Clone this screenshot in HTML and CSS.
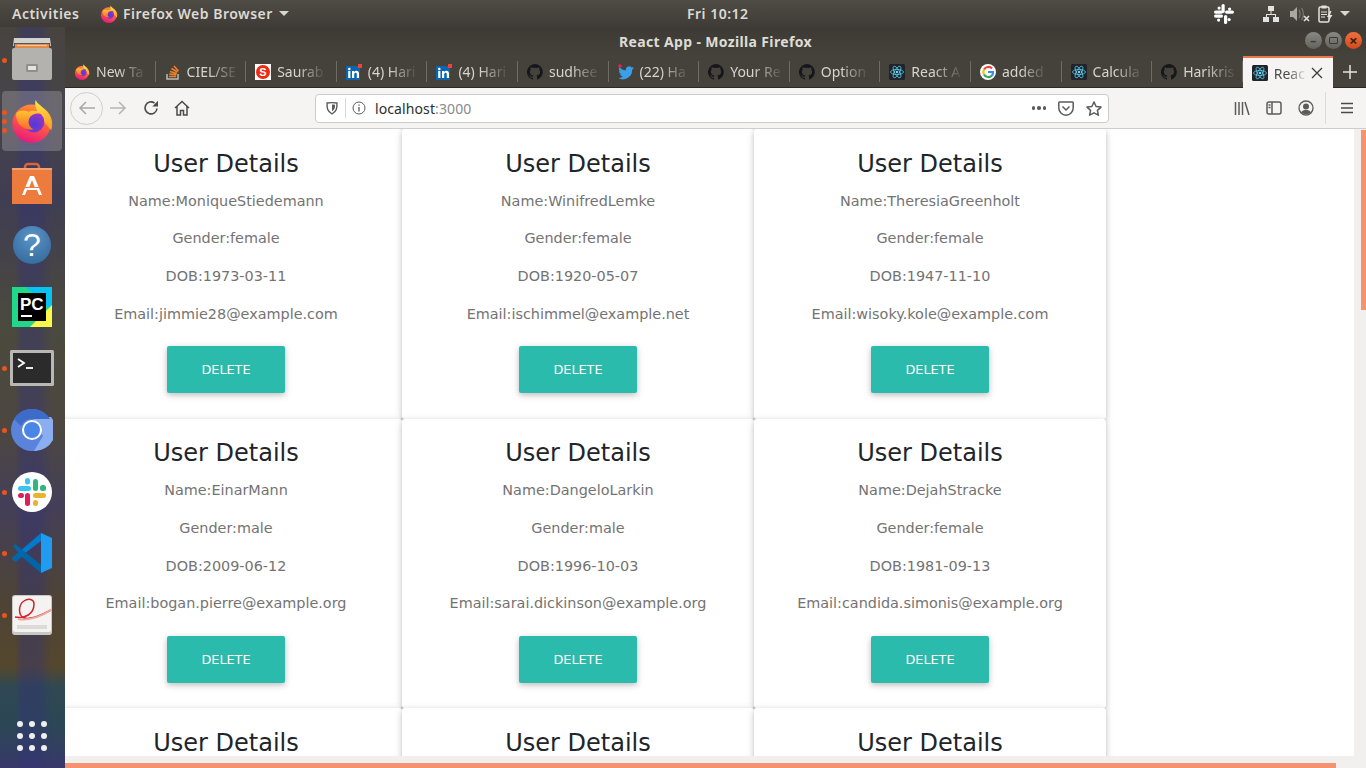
FILE: index.html
```html
<!DOCTYPE html>
<html lang="en">
<head>
    <meta charset="UTF-8">
    <title>React App - Mozilla Firefox</title>
    <link rel="stylesheet" href="styles.css">
</head>
<body>

<svg class="defs" width="0" height="0">
    <defs>
        <linearGradient id="fxBody" x1="0.7" y1="0" x2="0.3" y2="1">
            <stop offset="0" stop-color="#ff9a2e"/>
            <stop offset="0.55" stop-color="#ff4f4a"/>
            <stop offset="1" stop-color="#e31587"/>
        </linearGradient>
        <linearGradient id="fxFlame" x1="0" y1="0" x2="0.4" y2="1">
            <stop offset="0" stop-color="#ffe847"/>
            <stop offset="1" stop-color="#ffa52e"/>
        </linearGradient>
        <linearGradient id="fxFace" x1="0.5" y1="0" x2="0.4" y2="1">
            <stop offset="0" stop-color="#ffc62e"/>
            <stop offset="1" stop-color="#ff6a2e"/>
        </linearGradient>
        <radialGradient id="fxCore" cx="0.5" cy="0.65" r="0.65">
            <stop offset="0" stop-color="#4f3bd6"/>
            <stop offset="1" stop-color="#a033c4"/>
        </radialGradient>
        <symbol id="firefox" viewBox="0 0 48 48">
            <circle fill="url(#fxBody)" cx="23.500" cy="27" r="21"/>
            <path fill="url(#fxFlame)" d="M28 1c2 5 8 7 13 13 5 6 6 13 4 20L30 17c0-6-4-10-2-16z"/>
            <circle fill="url(#fxCore)" cx="26" cy="25" r="11.500"/>
            <path fill="url(#fxFace)" d="M7 15c4-3 9-3 13-1 4-2 10-2 14 2-6-1-11 1-13 5-2 5 0 10 5 12-7 2-15-2-18-9-1-3-2-6-1-9z"/>
        </symbol>
        <symbol id="github" viewBox="0 0 16 16">
            <path fill="#16171a" d="M8 0a8 8 0 0 0-2.500 15.600c.4.1.5-.2.5-.4v-1.400c-2.200.5-2.700-1-2.700-1-.4-.9-.9-1.200-.9-1.200-.7-.5.1-.5.1-.5.8.1 1.200.8 1.200.8.7 1.200 1.900.9 2.300.7.1-.5.3-.9.5-1.100-1.800-.2-3.600-.9-3.600-4 0-.9.3-1.600.8-2.100-.1-.2-.4-1 .1-2.100 0 0 .7-.2 2.200.8a7.600 7.600 0 0 1 4 0c1.500-1 2.200-.8 2.200-.8.4 1.100.2 1.900.1 2.100.5.6.8 1.300.8 2.100 0 3.100-1.900 3.700-3.700 3.900.3.3.6.8.6 1.500v2.200c0 .2.100.5.6.4A8 8 0 0 0 8 0z"/>
        </symbol>
        <symbol id="react" viewBox="0 0 16 16">
            <rect width="16" height="16" rx="1.500" fill="#20232a"/>
            <g fill="none" stroke="#61dafb" stroke-width="0.7">
                <ellipse cx="8" cy="8" rx="6.500" ry="2.500"/>
                <ellipse cx="8" cy="8" rx="6.500" ry="2.500" transform="rotate(60 8 8)"/>
                <ellipse cx="8" cy="8" rx="6.500" ry="2.500" transform="rotate(120 8 8)"/>
            </g>
            <circle cx="8" cy="8" r="1.300" fill="#61dafb"/>
        </symbol>
        <symbol id="linkedin" viewBox="0 0 16 16">
            <rect width="14" height="14" y="2" fill="#0a66b0"/>
            <rect x="2.200" y="7" width="2.200" height="7" fill="#fff"/>
            <circle cx="3.300" cy="5" r="1.300" fill="#fff"/>
            <path fill="#fff" d="M6 7h2.100v1c.5-.8 1.300-1.200 2.200-1.200 1.900 0 2.700 1.100 2.700 3V14h-2.200v-3.800c0-1-.3-1.500-1.100-1.500-.9 0-1.500.6-1.500 1.600V14H6z"/>
            <rect x="12" y="0" width="4" height="4" fill="#e8453c"/>
        </symbol>
    </defs>
</svg>

<div class="topbar">
    <span class="activities">Activities</span>
    <span class="app-menu">
        <svg class="app-menu-icon"><use href="#firefox"/></svg>
        Firefox Web Browser
        <span class="caret"></span>
    </span>
    <span class="clock">Fri 10:12</span>
    <div class="tray">
        <svg class="tray-slack" width="20" height="20" viewBox="0 0 20 20" fill="#fff">
            <rect x="0" y="6.500" width="9" height="3.200" rx="1.600"/><rect x="3.500" y="2.500" width="3.200" height="3.200" rx="1.600"/>
            <rect x="7.500" y="0" width="3.200" height="9" rx="1.600"/><rect x="14" y="3.500" width="3.200" height="3.200" rx="1.600"/>
            <rect x="11" y="6.500" width="9" height="3.200" rx="1.600"/><rect x="13.500" y="14" width="3.200" height="3.200" rx="1.600"/>
            <rect x="10" y="11" width="3.200" height="9" rx="1.600"/><rect x="0" y="10.500" width="9" height="3.200" rx="1.600"/>
            <rect x="3" y="14.500" width="3.200" height="3.200" rx="1.600"/>
        </svg>
        <svg class="tray-network" width="16" height="16" viewBox="0 0 16 16" fill="#e4e2de">
            <rect x="5" y="0" width="6" height="5"/><rect x="0" y="11" width="6" height="5"/><rect x="10" y="11" width="6" height="5"/>
            <path d="M7.500 5h1v3H13v3h-1V9H4v2H3V8h4.500z"/>
        </svg>
        <svg class="tray-volume" width="20" height="16" viewBox="0 0 20 16">
            <path fill="#aaa8a3" d="M0 5h3l4-4v14l-4-4H0z"/>
            <path fill="none" stroke="#77756f" stroke-width="1.300" d="M9 4c1.500 2 1.500 6 0 8M11.500 2c2.500 3 2.500 9 0 12"/>
            <path stroke="#e4e2de" stroke-width="1.600" d="M14 10l5 5M19 10l-5 5"/>
        </svg>
        <svg class="tray-clip" width="16" height="18" viewBox="0 0 16 18">
            <rect x="1" y="2" width="10" height="15" rx="1.500" fill="none" stroke="#e4e2de" stroke-width="1.500"/>
            <rect x="3.500" y="0.500" width="5" height="3" fill="#e4e2de"/>
            <path stroke="#e4e2de" d="M3 7h6M3 9.500h6M3 12h4"/>
            <path fill="#e4e2de" d="M12 6l-3 6h2.500l-1 4 4-6h-2.500l1.500-4z"/>
        </svg>
        <span class="caret"></span>
    </div>
</div>

<div class="desktop">
    <aside class="dock">
        <div class="dock-item running">
            <svg width="42" height="44" viewBox="0 0 42 44">
                <path fill="#d2d1cd" d="M3 0h36l1 8H2z"/>
                <path fill="#59554f" d="M3 5h36v5H3z"/>
                <path fill="#e08a4c" d="M4 6h34v4H4z"/>
                <path fill="#f2c9a0" d="M6 7h30v1H6z"/>
                <rect x="1" y="10" width="40" height="32" rx="2" fill="#b3b2ae"/>
                <rect x="15" y="26" width="12" height="8" rx="1.500" fill="#8f8e8a"/>
                <rect x="17" y="28" width="8" height="4" fill="#e4e3e0"/>
            </svg>
        </div>
        <div class="dock-item dock-active running-3">
            <svg width="44" height="44"><use href="#firefox"/></svg>
        </div>
        <div class="dock-item">
            <svg width="40" height="42" viewBox="0 0 40 42">
                <path fill="none" stroke="#d9662e" stroke-width="2.500" d="M13 10V5a3 3 0 0 1 3-3h8a3 3 0 0 1 3 3v5"/>
                <path fill="#ee7b3e" d="M0 6h40v36H0z"/>
                <path fill="#f2a06f" d="M0 6h40v2H0z"/>
                <path fill="#fff" d="M18 14h4l8 19h-3l-2-5h-10l-2 5h-3zm2 4l-3 8h6z"/>
                <path fill="#ee7b3e" d="M8 25h24v1H8z"/>
            </svg>
        </div>
        <div class="dock-item">
            <div class="help-icon">?</div>
        </div>
        <div class="dock-item">
            <svg width="40" height="40" viewBox="0 0 40 40">
                <rect width="40" height="40" fill="#21d789"/>
                <path fill="#07c3f2" d="M14 0h26v24z"/>
                <path fill="#fcf84a" d="M40 18v22H18z"/>
                <rect x="6" y="6" width="28" height="28" fill="#000"/>
                <rect x="9" y="28" width="11" height="2" fill="#fff"/>
                <text x="8" y="23" class="pc-text">PC</text>
            </svg>
        </div>
        <div class="dock-item running">
            <svg width="44" height="36" viewBox="0 0 44 36">
                <rect width="44" height="36" rx="1.500" fill="#b9b8b4"/>
                <rect x="3" y="3" width="38" height="30" fill="#2b2b2b"/>
                <path fill="none" stroke="#fff" stroke-width="1.800" d="M8 9l6 4-6 4"/>
                <path stroke="#fff" stroke-width="1.800" d="M16 18h7"/>
            </svg>
        </div>
        <div class="dock-item running">
            <svg width="42" height="42" viewBox="0 0 42 42">
                <circle cx="21" cy="21" r="21" fill="#5a84dc"/>
                <path fill="#8aaef0" d="M21 8h19a21 21 0 0 1-17 34l9-15z"/>
                <path fill="#3d6bc9" d="M3 10a21 21 0 0 1 18-10c8 0 14 4 18 10H21a11 11 0 0 0-11 7z"/>
                <circle cx="21" cy="21" r="10" fill="#fff"/>
                <circle cx="21" cy="21" r="8" fill="#4a86e8"/>
            </svg>
        </div>
        <div class="dock-item running">
            <svg width="40" height="40" viewBox="0 0 40 40">
                <circle cx="20" cy="20" r="20" fill="#fff"/>
                <rect x="6" y="14" width="13" height="5" rx="2.500" fill="#36c5f0"/>
                <rect x="13" y="6" width="5" height="6.500" rx="2.500" fill="#36c5f0"/>
                <rect x="21" y="7" width="5" height="12" rx="2.500" fill="#2eb67d"/>
                <rect x="28" y="13" width="6" height="6" rx="2.500" fill="#2eb67d"/>
                <rect x="21" y="21" width="13" height="5" rx="2.500" fill="#ecb22e"/>
                <rect x="21" y="28" width="5" height="6" rx="2.500" fill="#ecb22e"/>
                <rect x="13" y="21" width="5" height="13" rx="2.500" fill="#e01e5a"/>
                <rect x="6" y="21" width="6" height="5" rx="2.500" fill="#e01e5a"/>
            </svg>
        </div>
        <div class="dock-item running">
            <svg width="40" height="40" viewBox="0 0 40 40">
                <path fill="#007acc" d="M0 25l1 2 2 1 26-20V0z"/>
                <path fill="#0065a9" d="M1 13l2-2 26 21v8L10 24z"/>
                <path fill="#0065a9" d="M0 25l10-8 4 3-10 9z"/>
                <path fill="#1f9cf0" d="M29 0l11 5v30l-11 5z"/>
            </svg>
        </div>
        <div class="dock-item running">
            <svg width="40" height="40" viewBox="0 0 40 40">
                <rect width="40" height="40" rx="3" fill="#c9c8c5"/>
                <rect x="1" y="1" width="38" height="36" rx="2" fill="#f4f3f1"/>
                <path fill="none" stroke="#d2232a" stroke-width="1.500" d="M3 22c10 2 19-3 19-13 0-5-6-6-10-3-6 4-6 14 0 17 7 2 18-3 27-8"/>
                <path fill="none" stroke="#eaa9a5" stroke-width="2" d="M6 24c10 2 22-2 33-9"/>
                <rect x="5" y="30" width="30" height="4" fill="#dcdbd8"/>
            </svg>
        </div>
        <div class="app-grid">
            <i></i><i></i><i></i><i></i><i></i><i></i><i></i><i></i><i></i>
        </div>
    </aside>

    <div class="window">
        <div class="titlebar">
            <span>React App - Mozilla Firefox</span>
            <div class="win-buttons">
                <span class="win-btn">&#8211;</span>
                <span class="win-btn"><b class="win-max"></b></span>
                <span class="win-btn win-close">&#215;</span>
            </div>
        </div>

        <div class="tabs">
            <div class="tab"><svg class="fav"><use href="#firefox"/></svg><span class="tab-label">New Ta</span></div>
            <div class="tab">
                <svg class="fav" viewBox="0 0 16 16"><path stroke="#bcbbbb" fill="none" stroke-width="1.500" d="M2 10v5h11v-5"/><path stroke="#f48024" stroke-width="1.500" d="M4 12.500h7M4.300 10l7 .8M5 7.500l6.800 2M6.500 4.500l6 3.500M9 2l4.500 5"/></svg>
                <span class="tab-label">CIEL/SE</span>
            </div>
            <div class="tab">
                <svg class="fav" viewBox="0 0 16 16"><rect width="16" height="16" fill="#fff"/><circle cx="8" cy="8" r="7" fill="#f02a10"/><text x="8" y="12" class="fav-s">S</text></svg>
                <span class="tab-label">Saurab</span>
            </div>
            <div class="tab"><svg class="fav"><use href="#linkedin"/></svg><span class="tab-label">(4) Hari</span></div>
            <div class="tab"><svg class="fav"><use href="#linkedin"/></svg><span class="tab-label">(4) Hari</span></div>
            <div class="tab"><svg class="fav"><use href="#github"/></svg><span class="tab-label">sudhee</span></div>
            <div class="tab">
                <svg class="fav" viewBox="0 0 16 16"><path fill="#3a9fe8" d="M16 4c-.6.3-1.200.4-1.800.5.7-.4 1.100-1 1.400-1.700-.6.4-1.300.6-2 .8A3.200 3.200 0 0 0 8 6.500C5.300 6.400 3 5.100 1.300 3.100.5 4.600.9 6.400 2.300 7.400c-.5 0-1-.2-1.400-.4 0 1.600 1.100 2.900 2.600 3.200-.5.1-1 .2-1.500.1.400 1.300 1.600 2.200 3 2.200A6.500 6.500 0 0 1 0 13.800 9.100 9.100 0 0 0 14.100 5.700c.7-.4 1.400-1 1.900-1.700z"/><circle cx="2" cy="2" r="1.800" fill="#e0245e"/></svg>
                <span class="tab-label">(22) Ha</span>
            </div>
            <div class="tab"><svg class="fav"><use href="#github"/></svg><span class="tab-label">Your Re</span></div>
            <div class="tab"><svg class="fav"><use href="#github"/></svg><span class="tab-label">Option</span></div>
            <div class="tab"><svg class="fav"><use href="#react"/></svg><span class="tab-label">React A</span></div>
            <div class="tab">
                <svg class="fav" viewBox="0 0 16 16"><circle cx="8" cy="8" r="8" fill="#fff"/><path fill="none" stroke="#ea4335" stroke-width="2.200" d="M12 4.500A5 5 0 0 0 4 5.500"/><path fill="none" stroke="#fbbc05" stroke-width="2.200" d="M4 5.500a5 5 0 0 0 0 5"/><path fill="none" stroke="#34a853" stroke-width="2.200" d="M4 10.500a5 5 0 0 0 8 1"/><path fill="none" stroke="#4285f4" stroke-width="2.200" d="M12 11.500A5 5 0 0 0 13 8H8"/></svg>
                <span class="tab-label">added</span>
            </div>
            <div class="tab"><svg class="fav"><use href="#react"/></svg><span class="tab-label">Calcula</span></div>
            <div class="tab"><svg class="fav"><use href="#github"/></svg><span class="tab-label">Harikris</span></div>
            <div class="tab tab-active">
                <svg class="fav"><use href="#react"/></svg>
                <span class="tab-label">Reac</span>
                <svg class="tab-close" width="12" height="12" viewBox="0 0 12 12"><path stroke="#3b3b3b" stroke-width="1.300" d="M1 1l10 10M11 1L1 11"/></svg>
            </div>
            <svg class="tab-new" width="16" height="16" viewBox="0 0 16 16"><path stroke="#e6e4e0" stroke-width="1.500" d="M8 1v14M1 8h14"/></svg>
        </div>

        <div class="navbar">
            <div class="nav-back">
                <svg width="18" height="16" viewBox="0 0 18 16"><path fill="none" stroke="#a8a8a8" stroke-width="1.500" d="M17 8H2M8 2L2 8l6 6"/></svg>
            </div>
            <svg class="nav-forward" width="18" height="16" viewBox="0 0 18 16"><path fill="none" stroke="#b4b4b4" stroke-width="1.500" d="M1 8h15M10 2l6 6-6 6"/></svg>
            <svg class="nav-reload" width="16" height="16" viewBox="0 0 16 16"><path fill="none" stroke="#4a4a4a" stroke-width="1.600" d="M14 8.500A6 6 0 1 1 11.500 3"/><path fill="#4a4a4a" d="M15 .8V6.500H9.300z"/></svg>
            <svg class="nav-home" width="16" height="16" viewBox="0 0 16 16"><path fill="none" stroke="#4a4a4a" stroke-width="1.500" d="M1 8l7-6.500L15 8M3 6.500V15h3.500v-4.500h3V15H13V6.500"/></svg>
            <div class="urlbar">
                <svg class="url-shield" width="14" height="14" viewBox="0 0 14 14"><path fill="none" stroke="#5b5b5b" stroke-width="1.400" d="M2 2c3-.5 7-.5 10 0 0 5 0 8-5 11C2 10 2 7 2 2z"/><path fill="#5b5b5b" d="M7 3.500c1 0 2 0 3 .2 0 3 0 4.500-3 6.500z"/></svg>
                <span class="url-sep"></span>
                <svg class="url-info" width="14" height="14" viewBox="0 0 14 14"><circle cx="7" cy="7" r="6" fill="none" stroke="#5b5b5b"/><path stroke="#5b5b5b" stroke-width="1.300" d="M7 6v4.500M7 3.500v1.300"/></svg>
                <span class="url-text">localhost<span class="url-port">:3000</span></span>
                <span class="url-dots"><i></i><i></i><i></i></span>
                <svg class="url-pocket" width="16" height="15" viewBox="0 0 16 15"><path fill="none" stroke="#5b5b5b" stroke-width="1.500" d="M1.500 1h13a.7.7 0 0 1 .7.7V7A7.200 7.200 0 0 1 .8 7V1.700A.7.700 0 0 1 1.500 1z"/><path fill="none" stroke="#5b5b5b" stroke-width="1.500" d="M4.500 5.500L8 9l3.500-3.500"/></svg>
                <svg class="url-star" width="16" height="15" viewBox="0 0 16 15"><path fill="none" stroke="#5b5b5b" stroke-width="1.500" stroke-linejoin="round" d="M8 1l2.100 4.500 4.900.6-3.600 3.300 1 4.800L8 11.800l-4.400 2.400 1-4.800L1 6.100l4.900-.6z"/></svg>
            </div>
            <div class="nav-tools">
                <svg width="16" height="14" viewBox="0 0 16 14"><path stroke="#5b5b5b" stroke-width="1.500" d="M1.500 1v13M5 1v13M8.500 1v13M11 1l4 13"/></svg>
                <svg width="16" height="14" viewBox="0 0 16 14"><rect x="1" y="1" width="14" height="12" rx="2" fill="none" stroke="#5b5b5b" stroke-width="1.500"/><path stroke="#5b5b5b" stroke-width="1.500" d="M6 1v12M2.500 4h2M2.500 6.500h2"/></svg>
                <svg width="16" height="16" viewBox="0 0 16 16"><circle cx="8" cy="8" r="7" fill="none" stroke="#5b5b5b" stroke-width="1.300"/><circle cx="8" cy="6.500" r="3" fill="#5b5b5b"/><path fill="#5b5b5b" d="M3 12.500c1-2 3-2.500 5-2.500s4 .5 5 2.500C11.500 14.500 4.500 14.500 3 12.500z"/></svg>
            </div>
            <span class="nav-sep"></span>
            <svg class="nav-menu" width="14" height="12" viewBox="0 0 14 12"><path stroke="#4a4a4a" stroke-width="1.600" d="M1 1.500h12M1 6h12M1 10.500h12"/></svg>
        </div>

        <div class="viewport">
            <div class="page-area">
                <div class="cards">
                    <div class="card">
                        <h4>User Details</h4>
                        <p>Name:MoniqueStiedemann</p>
                        <p>Gender:female</p>
                        <p>DOB:1973-03-11</p>
                        <p>Email:jimmie28@example.com</p>
                        <button>Delete</button>
                    </div>
                    <div class="card">
                        <h4>User Details</h4>
                        <p>Name:WinifredLemke</p>
                        <p>Gender:female</p>
                        <p>DOB:1920-05-07</p>
                        <p>Email:ischimmel@example.net</p>
                        <button>Delete</button>
                    </div>
                    <div class="card">
                        <h4>User Details</h4>
                        <p>Name:TheresiaGreenholt</p>
                        <p>Gender:female</p>
                        <p>DOB:1947-11-10</p>
                        <p>Email:wisoky.kole@example.com</p>
                        <button>Delete</button>
                    </div>
                    <div class="card">
                        <h4>User Details</h4>
                        <p>Name:EinarMann</p>
                        <p>Gender:male</p>
                        <p>DOB:2009-06-12</p>
                        <p>Email:bogan.pierre@example.org</p>
                        <button>Delete</button>
                    </div>
                    <div class="card">
                        <h4>User Details</h4>
                        <p>Name:DangeloLarkin</p>
                        <p>Gender:male</p>
                        <p>DOB:1996-10-03</p>
                        <p>Email:sarai.dickinson@example.org</p>
                        <button>Delete</button>
                    </div>
                    <div class="card">
                        <h4>User Details</h4>
                        <p>Name:DejahStracke</p>
                        <p>Gender:female</p>
                        <p>DOB:1981-09-13</p>
                        <p>Email:candida.simonis@example.org</p>
                        <button>Delete</button>
                    </div>
                    <div class="card"><h4>User Details</h4></div>
                    <div class="card"><h4>User Details</h4></div>
                    <div class="card"><h4>User Details</h4></div>
                </div>
            </div>
            <div class="scroll-v"><div class="thumb-v"></div></div>
        </div>
        <div class="scroll-h"><div class="thumb-h"></div></div>
    </div>
</div>

</body>
</html>
```

FILE: styles.css
```css
* {
    box-sizing: border-box;
}
html, body {
    height: 100%;
}
body {
    margin: 0;
    width: 1366px;
    height: 768px;
    overflow: hidden;
    display: flex;
    flex-direction: column;
    font-family: "Noto Sans", "Open Sans", sans-serif;
    background-color: #000;
}
.defs {
    position: absolute;
}

/* barra de arriba */
.topbar {
    height: 27px;
    flex: none;
    display: flex;
    align-items: center;
    padding-left: 12px;
    color: #dcdad5;
    font-size: 14px;
    font-weight: 600;
    letter-spacing: 0.5px;
    background: linear-gradient(#4f4b45, #3f3c37);
}
.activities {
    width: 88px;
}
.app-menu {
    display: flex;
    align-items: center;
    width: 587px;
}
.app-menu-icon {
    width: 18px;
    height: 18px;
    margin-right: 5px;
}
.caret {
    width: 0;
    height: 0;
    margin-left: 6px;
    border-left: 5px solid transparent;
    border-right: 5px solid transparent;
    border-top: 5px solid #d8d6d1;
}
.clock {
    width: 130px;
}
.tray {
    margin-left: auto;
    display: flex;
    align-items: center;
    padding-right: 16px;
}
.tray-slack {
    margin-right: 29px;
}
.tray-network {
    margin-right: 11px;
}
.tray-volume {
    margin-right: 8px;
}

.desktop {
    flex: 1;
    display: flex;
    min-height: 0;
}

/* dock con el fondo de pantalla */
.dock {
    width: 65px;
    flex: none;
    display: flex;
    flex-direction: column;
    padding-top: 2px;
    background:
        linear-gradient(90deg, rgba(60, 60, 120, 0) 15px, rgba(50, 50, 120, 0.4) 22px, rgba(50, 50, 120, 0.4) 38px, rgba(60, 60, 120, 0) 52px),
        linear-gradient(#47443f 0, #47444c 90px, #3f3d52 170px, #4b4a3e 300px, #4d4740 400px, #443f58 480px, #4e4336 570px, #55472e 640px, #2f4852 660px, #2c4656 700px, #38386a 741px);
}
.dock-item {
    height: 61.7px;
    flex: none;
    display: flex;
    align-items: center;
    justify-content: center;
    position: relative;
    margin-left: 2px;
    width: 60px;
}
.dock-active {
    background-color: rgba(255, 255, 255, 0.2);
    border-radius: 4px;
    height: 60px;
    margin-bottom: 1.7px;
}
.running::before,
.running-3::before {
    content: "";
    position: absolute;
    left: 0;
    top: 50%;
    width: 5px;
    height: 5px;
    margin-top: -2px;
    border-radius: 50%;
    background-color: #e95420;
}
.running-3::before {
    box-shadow: 0 -9px 0 #e95420, 0 9px 0 #e95420;
}
.help-icon {
    width: 38px;
    height: 38px;
    border-radius: 50%;
    background: radial-gradient(circle at 50% 30%, #5a94c6, #2f6497);
    color: #fff;
    font: 32px/38px "Liberation Sans", sans-serif;
    text-align: center;
}
.pc-text {
    font: bold 17px "Liberation Sans", sans-serif;
    fill: #fff;
}
.app-grid {
    margin-top: auto;
    margin-bottom: 17px;
    margin-left: 17px;
    width: 30px;
    display: grid;
    grid-template-columns: repeat(3, 6px);
    gap: 6px;
}
.app-grid i {
    width: 6px;
    height: 6px;
    border-radius: 50%;
    background-color: #efefef;
}

/* ventana */
.window {
    flex: 1;
    min-width: 0;
    display: flex;
    flex-direction: column;
}
.titlebar {
    height: 29px;
    flex: none;
    position: relative;
    display: flex;
    align-items: center;
    justify-content: center;
    color: #dedcd7;
    font-size: 14px;
    font-weight: 700;
    letter-spacing: 0.35px;
    background: linear-gradient(#3d3a35, #45423b);
}
.win-buttons {
    position: absolute;
    right: 4px;
    top: 5px;
    display: flex;
    gap: 3px;
}
.win-btn {
    width: 17px;
    height: 17px;
    border-radius: 50%;
    display: flex;
    align-items: center;
    justify-content: center;
    color: #3b3a36;
    font-size: 12px;
    line-height: 1;
    background: linear-gradient(#8a8882, #63615b);
}
.win-max {
    width: 9px;
    height: 7px;
    border: 1.5px solid #3b3a36;
    border-radius: 1px;
}
.win-close {
    color: #40200f;
    font-size: 15px;
    background: linear-gradient(#f0703f, #d14a1c);
}

.tabs {
    height: 32px;
    flex: none;
    display: flex;
    align-items: stretch;
    background-color: #45423b;
    border-bottom: 1px solid #2a2824;
}
.tab {
    width: 90.6px;
    flex: none;
    display: flex;
    align-items: center;
    padding: 0 8px 0 9px;
    position: relative;
    color: #d6d4cf;
    font-size: 14px;
    white-space: nowrap;
}
.tab::after {
    content: "";
    position: absolute;
    right: 0;
    top: 5px;
    bottom: 5px;
    width: 1px;
    background-color: #6f6c65;
}
.fav {
    width: 16px;
    height: 16px;
    flex: none;
    margin-right: 6px;
}
.fav-s {
    font: bold 11px "Liberation Sans", sans-serif;
    fill: #fff;
    text-anchor: middle;
}
.tab-label {
    -webkit-mask-image: linear-gradient(90deg, #000 45%, rgba(0, 0, 0, 0.12) 100%);
    mask-image: linear-gradient(90deg, #000 45%, rgba(0, 0, 0, 0.12) 100%);
}
.tab-active {
    background-color: #f5f4f2;
    color: #4c4c4c;
    border-top: 2px solid #e9774d;
    margin-bottom: -1px;
    z-index: 1;
}
.tab-active::after {
    display: none;
}
.tab-close {
    flex: none;
    margin-left: auto;
    margin-right: 2px;
}
.tab-new {
    margin: 8px 0 0 9px;
}

.navbar {
    height: 41px;
    flex: none;
    display: flex;
    align-items: center;
    padding-left: 5px;
    background-color: #f5f4f2;
    border-bottom: 1px solid #cfcdc9;
}
.nav-back {
    width: 33px;
    height: 33px;
    flex: none;
    border: 1px solid #cfcecb;
    border-radius: 50%;
    display: flex;
    align-items: center;
    justify-content: center;
}
.nav-forward {
    margin-left: 6px;
}
.nav-reload {
    margin-left: 16px;
}
.nav-home {
    margin-left: 15px;
}
.urlbar {
    width: 794px;
    height: 29px;
    margin-left: 125px;
    flex: none;
    display: flex;
    align-items: center;
    padding: 0 6px 0 9px;
    background-color: #fff;
    border: 1px solid #cccbc8;
    border-radius: 4px;
    font-size: 14px;
    color: #2e2e2e;
}
.url-sep {
    width: 1px;
    height: 20px;
    margin: 0 6px;
    background-color: #d8d7d4;
}
.url-text {
    margin-left: 9px;
    letter-spacing: 0.1px;
}
.url-port {
    color: #8a8a8a;
}
.url-dots {
    margin-left: auto;
    display: flex;
    gap: 2px;
}
.url-dots i {
    width: 3.5px;
    height: 3.5px;
    border-radius: 50%;
    background-color: #5b5b5b;
}
.url-pocket {
    margin-left: 12px;
}
.url-star {
    margin-left: 12px;
}
.nav-tools {
    display: flex;
    align-items: center;
    gap: 16px;
    margin-left: 125px;
}
.nav-sep {
    width: 1px;
    height: 32px;
    margin-left: 11px;
    background-color: #dcdbd8;
}
.nav-menu {
    margin-left: 14px;
}

/* contenido de la pagina */
.viewport {
    flex: 1;
    min-height: 0;
    display: flex;
    background-color: #fff;
}
.page-area {
    flex: 1;
    min-width: 0;
    overflow: hidden;
    font-family: "DejaVu Sans", sans-serif;
}
.cards {
    display: grid;
    grid-template-columns: repeat(3, 352px);
    margin-left: -15px;
}
.card {
    padding: 20.7px 20px 20px;
    height: 289.5px;
    text-align: center;
    background-color: #fff;
    border-radius: 3px;
    box-shadow: 0 2px 5px 0 rgba(0, 0, 0, 0.16), 0 2px 10px 0 rgba(0, 0, 0, 0.12);
}
.card h4 {
    margin: 0 0 12.3px;
    font-size: 24px;
    font-weight: 400;
    line-height: 1.2;
    color: #212529;
}
.card p {
    margin: 0 0 16px;
    font-size: 14.4px;
    line-height: 1.5;
    color: #747373;
}
.card button {
    display: block;
    width: 118px;
    height: 47px;
    margin: 21px auto 0;
    border: none;
    border-radius: 2px;
    color: #fff;
    font-family: inherit;
    font-size: 12.8px;
    text-transform: uppercase;
    background-color: #2bbbad;
    box-shadow: 0 2px 5px 0 rgba(0, 0, 0, 0.16), 0 2px 10px 0 rgba(0, 0, 0, 0.12);
}
.scroll-v {
    width: 12px;
    flex: none;
    padding: 1px 0 0 7px;
    background-color: #f1f0ee;
}
.thumb-v {
    height: 180px;
    background-color: #f59270;
}
.scroll-h {
    height: 12px;
    flex: none;
    padding-top: 7px;
    background-color: #f1f0ee;
}
.thumb-h {
    width: 1271px;
    height: 5px;
    background-color: #f59270;
}
```
